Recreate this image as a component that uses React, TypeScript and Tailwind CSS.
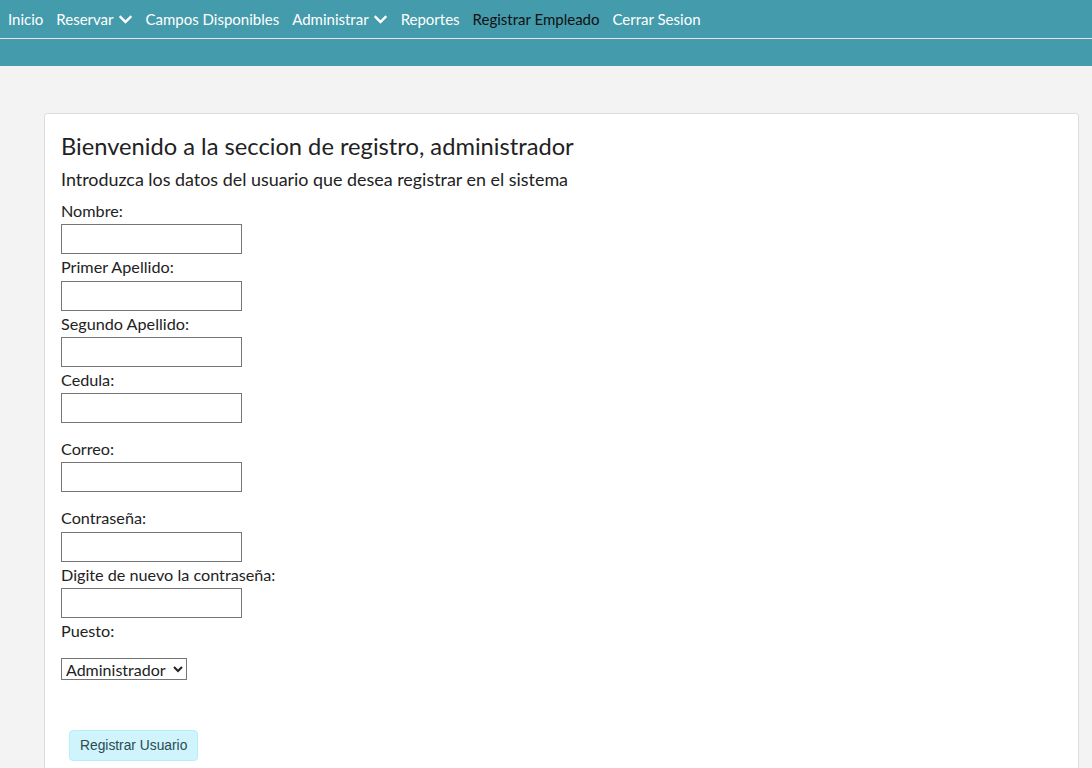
import { FaChevronDown } from "react-icons/fa";

const navItems = [
  { label: "Inicio" },
  { label: "Reservar", dropdown: true },
  { label: "Campos Disponibles" },
  { label: "Administrar", dropdown: true },
  { label: "Reportes" },
  { label: "Registrar Empleado", active: true },
  { label: "Cerrar Sesion" },
];

const fields = [
  { label: "Nombre:", type: "text" },
  { label: "Primer Apellido:", type: "text" },
  { label: "Segundo Apellido:", type: "text" },
  { label: "Cedula:", type: "text", gapAfter: true },
  { label: "Correo:", type: "email", gapAfter: true },
  { label: "Contraseña:", type: "password" },
  { label: "Digite de nuevo la contraseña:", type: "password" },
];

export default function App() {
  return (
    <div
      className="min-h-[768px] bg-[#f3f3f3] text-[#222]"
      style={{ fontFamily: "Lato, 'Noto Sans', sans-serif" }}
    >
      <header className="bg-[#449bac]">
        <nav className="h-[39px] flex items-center gap-[13px] px-[8px] text-[15px] text-white border-b border-[#e6e6e6]">
          {navItems.map((item) => (
            <a
              key={item.label}
              href="#"
              className={`flex items-center gap-[4px] ${item.active ? "text-[#111]" : "text-white"}`}
            >
              {item.label}
              {item.dropdown && <FaChevronDown className="w-[15px] h-[15px]" />}
            </a>
          ))}
        </nav>
        <div className="h-[27px]" />
      </header>

      <main className="pt-[47px] pl-[44px] pr-[13px]">
        <div className="bg-white border border-[#dcdcdc] rounded-[3px] px-[16px] pt-[15px] pb-[30px]">
          <h1 className="text-[23.7px] leading-[34px]">
            Bienvenido a la seccion de registro, administrador
          </h1>
          <p className="text-[17.9px] leading-[32px] mb-[3px]">
            Introduzca los datos del usuario que desea registrar en el sistema
          </p>
          <form className="flex flex-col">
            {fields.map((f) => (
              <div key={f.label} className={f.gapAfter ? "mb-[13px]" : ""}>
                <label className="block text-[16.2px] leading-[26.3px]">{f.label}</label>
                <input
                  type={f.type}
                  className="block w-[181px] h-[30px] border border-[#767676] bg-white"
                />
              </div>
            ))}
            <label className="block text-[16.2px] leading-[26.3px]">Puesto:</label>
            <div className="mt-[14px] flex">
              <select className="h-[22px] w-[126px] border border-[#767676] text-[16px] leading-none px-0">
                <option>Administrador</option>
                <option>Empleado</option>
              </select>
            </div>
            <div className="mt-[50px] pl-[8px]">
              <button
                type="button"
                className="h-[31px] px-[10px] rounded-[4px] bg-[#cff4fc] border border-[#b6effb] text-[13.8px] text-[#2c4a52]"
                style={{ fontFamily: "'Liberation Sans', Arial, sans-serif" }}
              >
                Registrar Usuario
              </button>
            </div>
          </form>
        </div>
      </main>
    </div>
  );
}
